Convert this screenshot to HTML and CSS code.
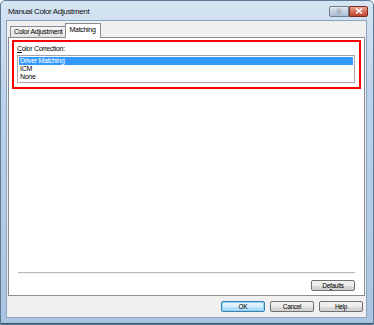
FILE: index.html
```html
<!DOCTYPE html>
<html>
<head>
<meta charset="utf-8">
<link rel="stylesheet" href="styles.css">
</head>
<body>
<div class="window">
  <div class="titlebar">
    <span class="title">Manual Color Adjustment</span>
    <div class="caption-btns">
      <div class="cbtn help-btn">?</div>
      <div class="cbtn close-btn">
        <svg width="8" height="6" viewBox="0 0 8 6"><path d="M1 0.5 L7 5.5 M7 0.5 L1 5.5" stroke="#fff" stroke-width="1.6"/></svg>
      </div>
    </div>
  </div>
  <div class="client">
    <div class="tabs">
      <div class="tab">Color Adjustment</div>
      <div class="tab active">Matching</div>
    </div>
    <div class="panel">
      <div class="group">
        <div class="label"><u>C</u>olor Correction:</div>
        <div class="listbox">
          <div class="item selected">Driver Matching</div>
          <div class="item">ICM</div>
          <div class="item">None</div>
        </div>
      </div>
      <div class="spacer"></div>
      <div class="sep"></div>
      <div class="defaults-row">
        <div class="btn">De<u>f</u>aults</div>
      </div>
    </div>
    <div class="footer">
      <div class="btn default">OK</div>
      <div class="btn">Cancel</div>
      <div class="btn">Help</div>
    </div>
  </div>
</div>
</body>
</html>
```

FILE: styles.css
```css
* { box-sizing: border-box; }
html, body { margin: 0; padding: 0; }
body {
  width: 374px;
  height: 325px;
  font-family: "Liberation Sans", Arial, sans-serif;
  font-size: 7px;
  letter-spacing: -0.3px;
  color: #000;
  background: #fff;
}
.window {
  width: 374px;
  height: 325px;
  display: flex;
  flex-direction: column;
  background: linear-gradient(#d6e4f3, #bcd2ea 30%, #a9c4e2);
  border: 1px solid #5d7994;
  border-radius: 5px 5px 0 0;
  padding: 0 6px 6px 5px;
  box-shadow: inset 0 -1px 0 #2a5a66;
}
.titlebar {
  height: 19px;
  display: flex;
  align-items: center;
  justify-content: space-between;
}
.title {
  font-size: 8px;
  letter-spacing: -0.35px;
  padding-left: 2px;
  padding-top: 1px;
  color: #111;
}
.caption-btns {
  display: flex;
  margin-right: -1px;
  margin-top: 1px;
}
.cbtn {
  height: 11px;
  display: flex;
  align-items: center;
  justify-content: center;
  border: 1px solid #6d7f93;
}
.help-btn {
  width: 20px;
  border-radius: 2px 0 0 2px;
  background: linear-gradient(#e4ebf3, #c3d0df 50%, #aebfd4);
  color: #fff;
  font-weight: bold;
  font-size: 8px;
  letter-spacing: 0;
  text-shadow: 0 0 1px #334, 0 0 1px #334;
}
.close-btn {
  width: 19px;
  border-radius: 0 2px 2px 0;
  border-color: #7a2b22;
  background: linear-gradient(#e9a897, #d66f58 50%, #c0432c);
}
.client {
  flex: 1;
  background: #f0f0f0;
  border: 1px solid #8ea4bd;
  display: flex;
  flex-direction: column;
  padding: 0 1px 0 1px;
}
.tabs {
  display: flex;
  align-items: flex-end;
  padding-left: 2px;
  height: 14px;
  margin-top: 2px;
  position: relative;
  z-index: 1;
}
.tab {
  height: 11px;
  padding: 0 2px 0 3px;
  border: 1px solid #898c95;
  border-bottom: none;
  background: linear-gradient(#f5f5f5, #e4e4e4);
  line-height: 10px;
  white-space: nowrap;
}
.tab.active {
  background: #fff;
  margin-left: -1px;
  padding: 0 4px 0 4px;
  line-height: 11px;
  margin-bottom: -1px;
  height: 15px;
}
.panel {
  flex: 1;
  background: #fff;
  border: 1px solid #898c95;
  display: flex;
  flex-direction: column;
  padding: 2px 3px 4px 3px;
}
.group {
  border: 2px solid #f00;
  padding: 2px 4px 4px 3px;
}
.label {
  line-height: 9px;
  height: 11px;
}
.listbox {
  height: 28px;
  border: 1px solid #aaacb2;
  border-top-color: #a0a2a8;
  padding: 1px 1px;
}
.item {
  height: 8px;
  line-height: 8px;
  padding-left: 1px;
}
.item.selected {
  background: #3399ff;
  color: #fff;
}
.spacer { flex: 1; }
.sep {
  height: 2px;
  margin: 0 6px 0 6px;
  border-top: 1px solid #bbbbbb;
  border-bottom: 1px solid #f4f4f4;
}
.defaults-row {
  display: flex;
  justify-content: flex-end;
  padding: 6px 6px 0 0;
}
.btn {
  width: 44px;
  height: 11px;
  border: 1px solid #707070;
  border-radius: 2px;
  background: linear-gradient(#f2f2f2 0%, #ebebeb 50%, #dddddd 51%, #cfcfcf 100%);
  display: flex;
  align-items: center;
  justify-content: center;
  font-size: 6.5px;
  line-height: 8px;
}
.btn.default {
  border-color: #3c7fb1;
  box-shadow: inset 0 0 0 1px #8fd3f5;
  background: linear-gradient(#eaf6fd 0%, #d9f0fc 50%, #bee6fd 51%, #a7d9f5 100%);
}
.footer {
  display: flex;
  justify-content: flex-end;
  gap: 5px;
  padding: 5px 2px 0 0;
  height: 21px;
}
```
